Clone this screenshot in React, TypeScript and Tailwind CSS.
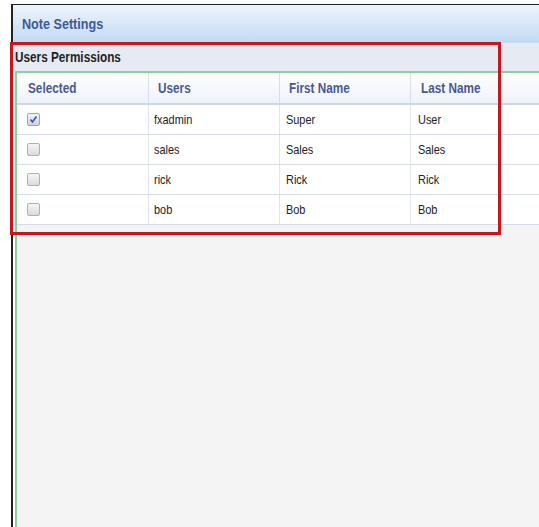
import React from 'react';

const users = [
  { name: 'fxadmin', first: 'Super', last: 'User', selected: true },
  { name: 'sales', first: 'Sales', last: 'Sales', selected: false },
  { name: 'rick', first: 'Rick', last: 'Rick', selected: false },
  { name: 'bob', first: 'Bob', last: 'Bob', selected: false },
];

const font = { fontFamily: '"Liberation Sans", Arial, sans-serif' };

// condensed look of the old grid theme
function T({ children }: { children: React.ReactNode }) {
  return <span className="inline-block origin-left scale-x-[0.84] whitespace-nowrap">{children}</span>;
}

function Check({ on }: { on: boolean }) {
  return (
    <span
      className={
        'flex h-[13px] w-[13px] items-center justify-center rounded-[2px] border ' +
        (on
          ? 'border-[#9aa3b8] bg-gradient-to-b from-[#f2f4fa] to-[#cdd3e3]'
          : 'border-[#b0b0b0] bg-gradient-to-b from-[#f6f6f6] to-[#dadada]')
      }
    >
      {on && (
        <svg width="9" height="9" viewBox="0 0 9 9">
          <path d="M1.5 4.5 L3.5 7 L7.5 1.5" fill="none" stroke="#3b4fb5" strokeWidth="1.6" />
        </svg>
      )}
    </span>
  );
}

export default function App() {
  return (
    <div className="relative h-[527px] w-[539px] overflow-hidden bg-white" style={font}>
      <div className="ml-[11px] mt-[4px] flex h-[523px] flex-col border-l-2 border-t border-[#222]">
        {/* window title */}
        <div className="flex h-[38px] items-center bg-gradient-to-b from-[#eef4fc] to-[#c2d9f3] pl-[9px] text-[15px] font-bold text-[#3b5a9a]">
          <T>Note Settings</T>
        </div>

        {/* section caption */}
        <div className="flex h-[28px] items-center bg-[#e6ebf3] pl-[2px] text-[14px] font-bold text-[#222]">
          <T>Users Permissions</T>
        </div>

        {/* grid area */}
        <div className="ml-[2px] flex flex-1 flex-col border-l-2 border-t-2 border-[#8fcf9f] bg-[#f4f4f4]">
          <div className="flex h-[32px] border-b-2 border-[#cfd7e5] bg-gradient-to-b from-[#ffffff] to-[#eef2f8] text-[14px] font-bold text-[#4a5890]">
            <div className="flex w-[132px] items-center border-r border-[#d8dee8] pl-[11px]"><T>Selected</T></div>
            <div className="flex w-[131px] items-center border-r border-[#d8dee8] pl-[9px]"><T>Users</T></div>
            <div className="flex w-[131px] items-center border-r border-[#d8dee8] pl-[9px]"><T>First Name</T></div>
            <div className="flex flex-1 items-center pl-[10px]"><T>Last Name</T></div>
          </div>
          {users.map((u) => (
            <div key={u.name} className="flex h-[30px] border-b border-[#d6dce8] bg-white text-[13px] text-[#222]">
              <div className="flex w-[132px] items-center border-r border-[#dfe4ec] pl-[10px]">
                <Check on={u.selected} />
              </div>
              <div className="flex w-[131px] items-center border-r border-[#dfe4ec] pl-[5px]"><T>{u.name}</T></div>
              <div className="flex w-[131px] items-center border-r border-[#dfe4ec] pl-[6px]"><T>{u.first}</T></div>
              <div className="flex flex-1 items-center pl-[7px]"><T>{u.last}</T></div>
            </div>
          ))}
        </div>
      </div>

      {/* red highlight frame */}
      <div className="pointer-events-none absolute left-[10px] top-[42px] h-[193px] w-[491px] border-[3px] border-[#c8161d]" />
    </div>
  );
}
